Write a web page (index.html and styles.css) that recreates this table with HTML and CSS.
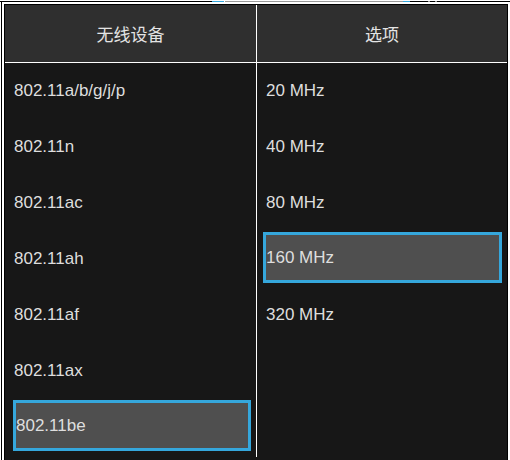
FILE: index.html
```html
<!DOCTYPE html>
<html lang="zh">
<head>
<meta charset="utf-8">
<title>无线设备</title>
<link rel="stylesheet" href="styles.css">
</head>
<body>
<div class="strip">
  <span class="seg k s1"></span>
  <span class="seg b s2"></span>
  <span class="seg w s3"></span>
  <span class="seg g s4"></span>
  <span class="seg b s5"></span>
  <span class="seg k s6"></span>
  <span class="seg g s7"></span>
  <span class="seg k s8"></span>
  <span class="seg g s7"></span>
  <span class="seg k s9"></span>
</div>
<div class="frame">
  <div class="table">
    <div class="head">
      <div class="hcell">无线设备</div>
      <div class="hcell">选项</div>
    </div>
    <div class="bodyrow">
      <div class="col col-dev">
        <div class="item">802.11a/b/g/j/p</div>
        <div class="item">802.11n</div>
        <div class="item">802.11ac</div>
        <div class="item">802.11ah</div>
        <div class="item">802.11af</div>
        <div class="item">802.11ax</div>
        <div class="item sel"><div class="box">802.11be</div></div>
      </div>
      <div class="col col-opt">
        <div class="item">20 MHz</div>
        <div class="item">40 MHz</div>
        <div class="item">80 MHz</div>
        <div class="item sel"><div class="box">160 MHz</div></div>
        <div class="item">320 MHz</div>
      </div>
    </div>
  </div>
</div>
</body>
</html>
```

FILE: styles.css
```css
html, body {
  margin: 0;
  padding: 0;
  background: #ffffff;
  overflow: hidden;
}
body {
  width: 510px;
  height: 460px;
  font-family: "Liberation Sans", "Noto Sans CJK SC", sans-serif;
  color: #dedede;
}
.strip {
  margin-top: 1px;
  height: 1px;
  display: flex;
}
.seg { display: block; height: 1px; flex: none; }
.seg.k { background: #000; }
.seg.b { background: #35a7dc; }
.seg.g { background: #9a9a9a; }
.seg.w { background: #fff; }
.s1 { width: 212px; }
.s2 { width: 12px; }
.s3 { width: 1px; }
.s4 { width: 178px; }
.s5 { width: 7px; }
.s6 { width: 18px; }
.s7 { width: 2px; }
.s8 { width: 5px; }
.s9 { width: 73px; }

.frame {
  margin-left: 1px;
  border-left: 1px solid #000;
  padding: 2px 0 0 2px;
  height: 460px;
}
.table {
  width: 502px;
  height: 460px;
  border: 1px solid #000;
  border-bottom: none;
  background: #171717;
}
.head {
  display: grid;
  grid-template-columns: 251px 250px;
  column-gap: 1px;
  background: #ffffff;
  border-bottom: 1px solid #ffffff;
}
.hcell {
  height: 57px;
  background: #2f2f2f;
  display: flex;
  align-items: center;
  justify-content: center;
  font-family: "Noto Sans CJK SC", sans-serif;
  font-size: 17px;
  color: #e4e4e4;
  padding-bottom: 1px;
  box-sizing: border-box;
}
.bodyrow {
  display: grid;
  grid-template-columns: 251px 250px;
  column-gap: 1px;
  background: #ffffff;
  height: 394px;
}
.col {
  background: #171717;
}
.item {
  height: 56px;
  display: flex;
  align-items: center;
  padding-left: 9px;
  font-size: 17px;
  box-sizing: border-box;
}
.item.sel {
  padding: 1px 5px 4px 8px;
  align-items: stretch;
}
.col-opt .item { padding-left: 9px; }
.col-opt .item.sel { padding-left: 6px; }
.box {
  flex: 1;
  border: 3px solid #35a7dc;
  background: #4f4f4f;
  display: flex;
  align-items: center;
  padding-top: 1px;
}
```
